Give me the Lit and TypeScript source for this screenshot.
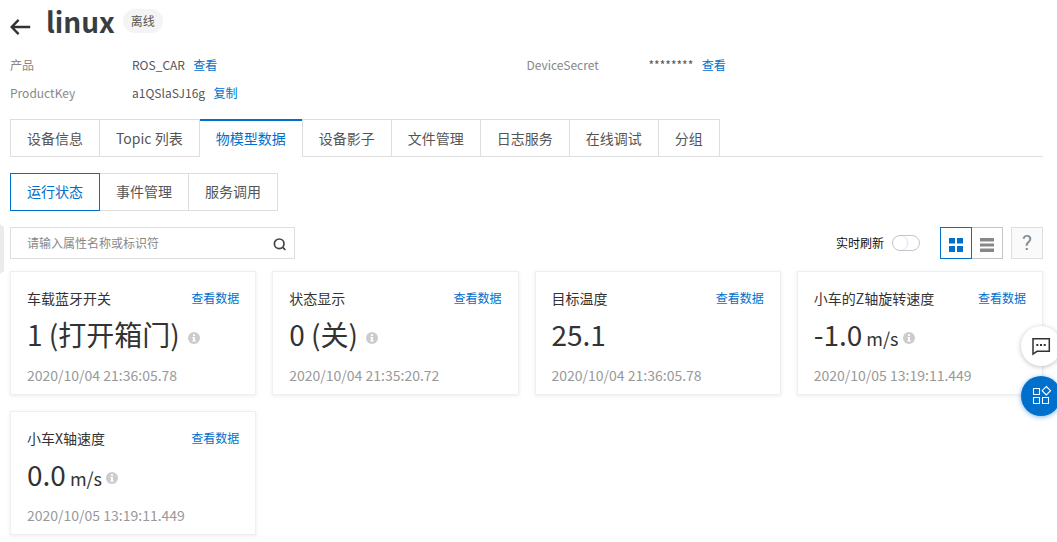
import { LitElement, html, css, nothing } from "lit";
import { customElement, property } from "lit/decorators.js";

interface Metric {
  name: string;
  value: string;
  unit?: string;
  info?: boolean;
  time: string;
}

const METRICS: Metric[] = [
  { name: "车载蓝牙开关", value: "1 (打开箱门)", info: true, time: "2020/10/04 21:36:05.78" },
  { name: "状态显示", value: "0 (关)", info: true, time: "2020/10/04 21:35:20.72" },
  { name: "目标温度", value: "25.1", time: "2020/10/04 21:36:05.78" },
  { name: "小车的Z轴旋转速度", value: "-1.0", unit: "m/s", info: true, time: "2020/10/05 13:19:11.449" },
  { name: "小车X轴速度", value: "0.0", unit: "m/s", info: true, time: "2020/10/05 13:19:11.449" },
];

const TABS = ["设备信息", "Topic 列表", "物模型数据", "设备影子", "文件管理", "日志服务", "在线调试", "分组"];
const SUBTABS = ["运行状态", "事件管理", "服务调用"];

@customElement("metric-card")
class MetricCard extends LitElement {
  @property({ attribute: false }) metric!: Metric;

  static styles = css`
    :host {
      display: block;
      box-sizing: border-box;
      height: 124px;
      padding: 15px 16px;
      border: 1px solid #efefef;
      background: #fff;
      box-shadow: 0 1px 4px rgba(0, 0, 0, 0.08);
    }
    .head {
      display: flex;
      justify-content: space-between;
      line-height: 22px;
      color: #333;
      font-size: 14px;
    }
    .link { color: #0070cc; font-size: 12px; }
    .value {
      display: flex;
      align-items: baseline;
      height: 40px;
      margin-top: 5px;
      line-height: 40px;
      font-size: 28px;
      color: #333;
      white-space: pre;
    }
    .unit { font-size: 18px; margin-left: 4px; }
    .info { margin-left: 8px; width: 12px; height: 12px; align-self: flex-start; margin-top: 18px; }
    .unit + .info { margin-left: 4px; }
    .time { margin-top: 10px; line-height: 22px; font-size: 14px; color: #999; }
  `;

  render() {
    const m = this.metric;
    return html`
      <div class="head"><span>${m.name}</span><span class="link">查看数据</span></div>
      <div class="value"><span>${m.value}</span>${m.unit ? html`<span class="unit">${m.unit}</span>` : nothing}${m.info
        ? html`<svg class="info" viewBox="0 0 12 12">
            <circle cx="6" cy="6" r="6" fill="#ccc" />
            <path d="M5 2.3h2v1.7H5zM4.2 4.9H7v3.6h.9v1.1H4.2V8.5H5V6h-.8z" fill="#fff" />
          </svg>`
        : nothing}</div>
      <div class="time">${m.time}</div>
    `;
  }
}

@customElement("app-root")
class AppRoot extends LitElement {
  static styles = css`
    :host {
      display: block;
      position: relative;
      box-sizing: border-box;
      height: 542px;
      padding: 0 14px 0 10px;
      overflow: hidden;
      background: #fff;
      color: #555;
      font: 12px/20px "Noto Sans CJK SC", sans-serif;
    }
    * { box-sizing: border-box; }
    .title { display: flex; height: 51px; }
    .back { width: 21px; height: 18px; margin: 18px 0 0 0; }
    h1 { margin: 1px 0 0 15px; font-size: 28px; line-height: 40px; font-weight: 700; color: #373d41; }
    .badge {
      height: 24px;
      margin: 9px 0 0 8px;
      padding: 0 8px;
      border-radius: 12px;
      background: #f4f4f4;
      line-height: 24px;
    }
    .facts { display: grid; grid-template-columns: 516.5px 1fr; height: 68px; grid-auto-rows: 28px; line-height: 28px; }
    .fact { display: flex; }
    .label { width: 122px; color: #888; }
    .link { margin-left: 8.4px; color: #0070cc; }
    .tabs { display: flex; height: 38px; font-size: 14px; line-height: 38px; }
    .tab {
      padding: 0 16px;
      border: 1px solid #dedede;
      border-right: 0;
      line-height: 37px;
      white-space: nowrap;
    }
    .tab:last-of-type { border-right: 1px solid #dedede; }
    .rest { flex: 1; border-bottom: 1px solid #dedede; }
    .tab.on {
      padding: 0 16px 0 17px;
      border: 0;
      background:
        linear-gradient(#0070cc, #0070cc) 1px 0 / 100% 2px no-repeat,
        linear-gradient(#dedede, #dedede) 0 0 / 1px 100% no-repeat;
      color: #0070cc;
      line-height: 39px;
    }
    .subtabs { display: flex; height: 38px; margin-top: 16px; font-size: 14px; }
    .sub {
      padding: 0 16px;
      border: 1px solid #dedede;
      border-left: 0;
      line-height: 35px;
    }
    .sub.on { border: 1px solid #0070cc; color: #0070cc; }
    .toolbar { display: flex; align-items: center; height: 32px; margin-top: 16px; }
    .search {
      display: flex;
      justify-content: space-between;
      width: 285px;
      height: 32px;
      padding: 0 7px 0 16px;
      border: 1px solid #dedede;
      color: #888;
      line-height: 30px;
    }
    .search svg { width: 14px; height: 14px; margin-top: 10px; }
    .refresh { margin-left: auto; color: #111; }
    .switch {
      width: 28px;
      height: 16px;
      margin: 0 20px 0 8px;
      border: 1px solid #c4c6cf;
      border-radius: 8px;
    }
    .knob { width: 14px; height: 14px; border-radius: 50%; box-shadow: 1px 0 2px rgba(0, 0, 0, 0.12); }
    .view { width: 32px; height: 32px; border: 1px solid #c4c4c4; }
    .view.on { border-color: #0070cc; }
    .view.list { width: 31px; border-left: 0; }
    .view svg { display: block; width: 30px; height: 30px; }
    .view.list svg { width: 29px; }
    .help {
      width: 32px;
      height: 32px;
      margin-left: 8px;
      border: 1px solid #dedede;
      background: #fafafa;
      color: #888;
      font-size: 21px;
      line-height: 31px;
      text-align: center;
      font-family: Roboto, sans-serif;
    }
    .cards {
      display: grid;
      grid-template-columns: repeat(4, minmax(0, 1fr));
      gap: 16px;
      margin-top: 12px;
    }
    .handle {
      position: absolute;
      left: 0;
      top: 224px;
      width: 4px;
      height: 50px;
      background: #ebebeb;
      clip-path: polygon(0 0, 100% 3px, 100% 47px, 0 100%);
    }
    .float { position: absolute; left: 1021px; width: 40px; height: 40px; border-radius: 50%; }
    .float svg { display: block; width: 40px; height: 40px; }
    .chat { top: 326px; background: #fff; box-shadow: 0 1px 5px rgba(0, 0, 0, 0.25); }
    .apps { top: 376px; background: #0070cc; box-shadow: 0 1px 5px rgba(0, 112, 204, 0.5); }
  `;

  render() {
    return html`
      <div class="title">
        <svg class="back" viewBox="0 0 21 18" fill="none" stroke="#333" stroke-width="2.4">
          <path d="M20.2 9H2M8.6 1.9L1.7 9L8.6 16.1" />
        </svg>
        <h1>linux</h1>
        <span class="badge">离线</span>
      </div>
      <div class="facts">
        <div class="fact"><span class="label">产品</span><span>ROS_CAR</span><span class="link">查看</span></div>
        <div class="fact"><span class="label">DeviceSecret</span><span>********</span><span class="link">查看</span></div>
        <div class="fact"><span class="label">ProductKey</span><span>a1QSlaSJ16g</span><span class="link">复制</span></div>
      </div>
      <div class="tabs">
        ${TABS.map((t) => html`<span class="tab ${t === "物模型数据" ? "on" : ""}">${t}</span>`)}
        <div class="rest"></div>
      </div>
      <div class="subtabs">
        ${SUBTABS.map((t, i) => html`<span class="sub ${i === 0 ? "on" : ""}">${t}</span>`)}
      </div>
      <div class="toolbar">
        <div class="search">
          <span>请输入属性名称或标识符</span>
          <svg viewBox="0 0 14 14" fill="none" stroke="#444" stroke-width="1.7">
            <circle cx="6.2" cy="5.8" r="4.8" /><path d="M9.5 9.1L12.4 12" />
          </svg>
        </div>
        <span class="refresh">实时刷新</span>
        <span class="switch"><div class="knob"></div></span>
        <span class="view on">
          <svg viewBox="0 0 30 30" fill="#0070cc">
            <path d="M8 10h6v5.5H8zM16 10h6v5.5h-6zM8 18h6v6H8zM16 18h6v6h-6z" />
          </svg>
        </span>
        <span class="view list">
          <svg viewBox="0 0 29 30" fill="#888">
            <path d="M8 10h14v3.5H8zM8 15.6h14v2.8H8zM8 20.5h14v3.5H8z" />
          </svg>
        </span>
        <span class="help">?</span>
      </div>
      <div class="cards">${METRICS.map((m) => html`<metric-card .metric=${m}></metric-card>`)}</div>
      <div class="handle"></div>
      <div class="float chat">
        <svg viewBox="0 0 40 40">
          <path d="M12 12.7h16.3v12.6H16L12 28z" fill="none" stroke="#333" stroke-width="1.5" />
          <path d="M15.3 18h2v2h-2zM19 18h2v2h-2zM22.7 18h2v2h-2z" fill="#333" />
        </svg>
      </div>
      <div class="float apps">
        <svg viewBox="0 0 40 40" fill="none" stroke="#fff" stroke-width="1.1">
          <path d="M12.5 12.5h6v6h-6zM12.5 21.5h6v6h-6zM21.5 21.5h6v6h-6zM25.3 10.5l4.2 4.2l-4.2 4.2l-4.2-4.2z" />
        </svg>
      </div>
    `;
  }
}
